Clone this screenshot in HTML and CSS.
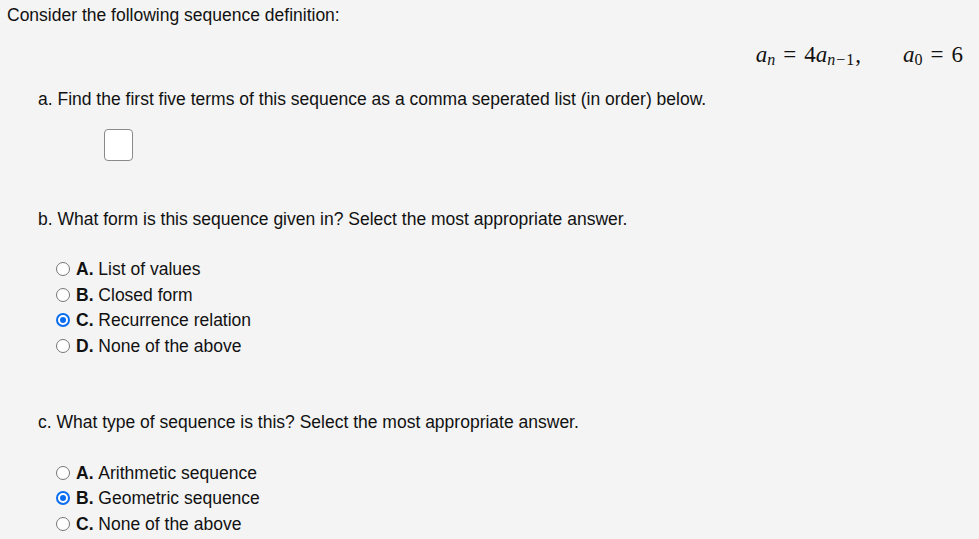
FILE: index.html
```html
<!DOCTYPE html>
<html>
<head>
<meta charset="utf-8">
<link rel="stylesheet" href="styles.css">
</head>
<body>
<div class="page">
  <p class="intro">Consider the following sequence definition:</p>
  <div class="math">
    <span class="mi">a</span><sub class="ms mi">n</sub><span class="mo">=</span><span class="mn">4</span><span class="mi">a</span><sub class="ms"><span class="mi">n</span><span class="sm">−</span>1</sub><span class="mp">,</span>
    <span class="gap"></span>
    <span class="mi">a</span><sub class="ms">0</sub><span class="mo">=</span><span class="mn">6</span>
  </div>
  <p class="q qa">a. Find the first five terms of this sequence as a comma seperated list (in order) below.</p>
  <div class="answer"><span class="box"></span></div>
  <p class="q qb">b. What form is this sequence given in? Select the most appropriate answer.</p>
  <ul class="opts first-b">
    <li><span class="radio"></span><b>A.</b>&nbsp;List of values</li>
    <li><span class="radio"></span><b>B.</b>&nbsp;Closed form</li>
    <li><span class="radio on"></span><b>C.</b>&nbsp;Recurrence relation</li>
    <li><span class="radio"></span><b>D.</b>&nbsp;None of the above</li>
  </ul>
  <p class="q qc">c. What type of sequence is this? Select the most appropriate answer.</p>
  <ul class="opts first-c">
    <li><span class="radio"></span><b>A.</b>&nbsp;Arithmetic sequence</li>
    <li><span class="radio on"></span><b>B.</b>&nbsp;Geometric sequence</li>
    <li><span class="radio"></span><b>C.</b>&nbsp;None of the above</li>
  </ul>
</div>
</body>
</html>
```
FILE: styles.css
```css
html, body {
  margin: 0;
  padding: 0;
  background: #f4f4f4;
}
.page {
  font-family: "Liberation Sans", Arial, sans-serif;
  font-size: 17.5px;
  color: #111;
  line-height: 20px;
  padding-top: 5px;
}
p { margin: 0; }
.intro { padding-left: 7px; }
.math {
  margin-top: 18px;
  height: 24px;
  line-height: 24px;
  display: flex;
  justify-content: flex-end;
  align-items: baseline;
  padding-right: 16px;
  font-family: "Liberation Serif", "Times New Roman", serif;
  font-size: 23px;
  color: #111;
}
.mi { font-style: italic; }
.ms { font-size: 16px; line-height: 1; position: relative; top: 3px; vertical-align: baseline; }
.sm { margin: 0 1px; }
.mo { margin: 0 8px; }
.mp { margin-left: 1px; }
.gap { width: 42px; }
.q { padding-left: 38px; }
.qa { margin-top: 22px; }
.answer { margin-top: 20px; padding-left: 104px; height: 32px; }
.box {
  display: block;
  width: 27px;
  height: 30px;
  border: 1px solid #8a8a8a;
  border-radius: 4px;
  background: #fff;
}
.qb { margin-top: 48px; }
.qc { margin-top: 53px; }
.opts {
  list-style: none;
  margin: 0;
  padding: 0 0 0 56px;
}
.first-b { margin-top: 27px; }
.first-c { margin-top: 28px; }
.opts li {
  height: 25.7px;
  display: flex;
  align-items: center;
}
.opts b { font-weight: bold; }
.radio {
  box-sizing: border-box;
  width: 14px;
  height: 14px;
  border-radius: 50%;
  border: 1px solid #767676;
  background: #fff;
  margin-right: 6px;
  flex: none;
  position: relative;
}
.radio.on {
  border: 2px solid #0a6cf0;
}
.radio.on::after {
  content: "";
  position: absolute;
  left: 2px;
  top: 2px;
  width: 6px;
  height: 6px;
  border-radius: 50%;
  background: #0a6cf0;
}
```
